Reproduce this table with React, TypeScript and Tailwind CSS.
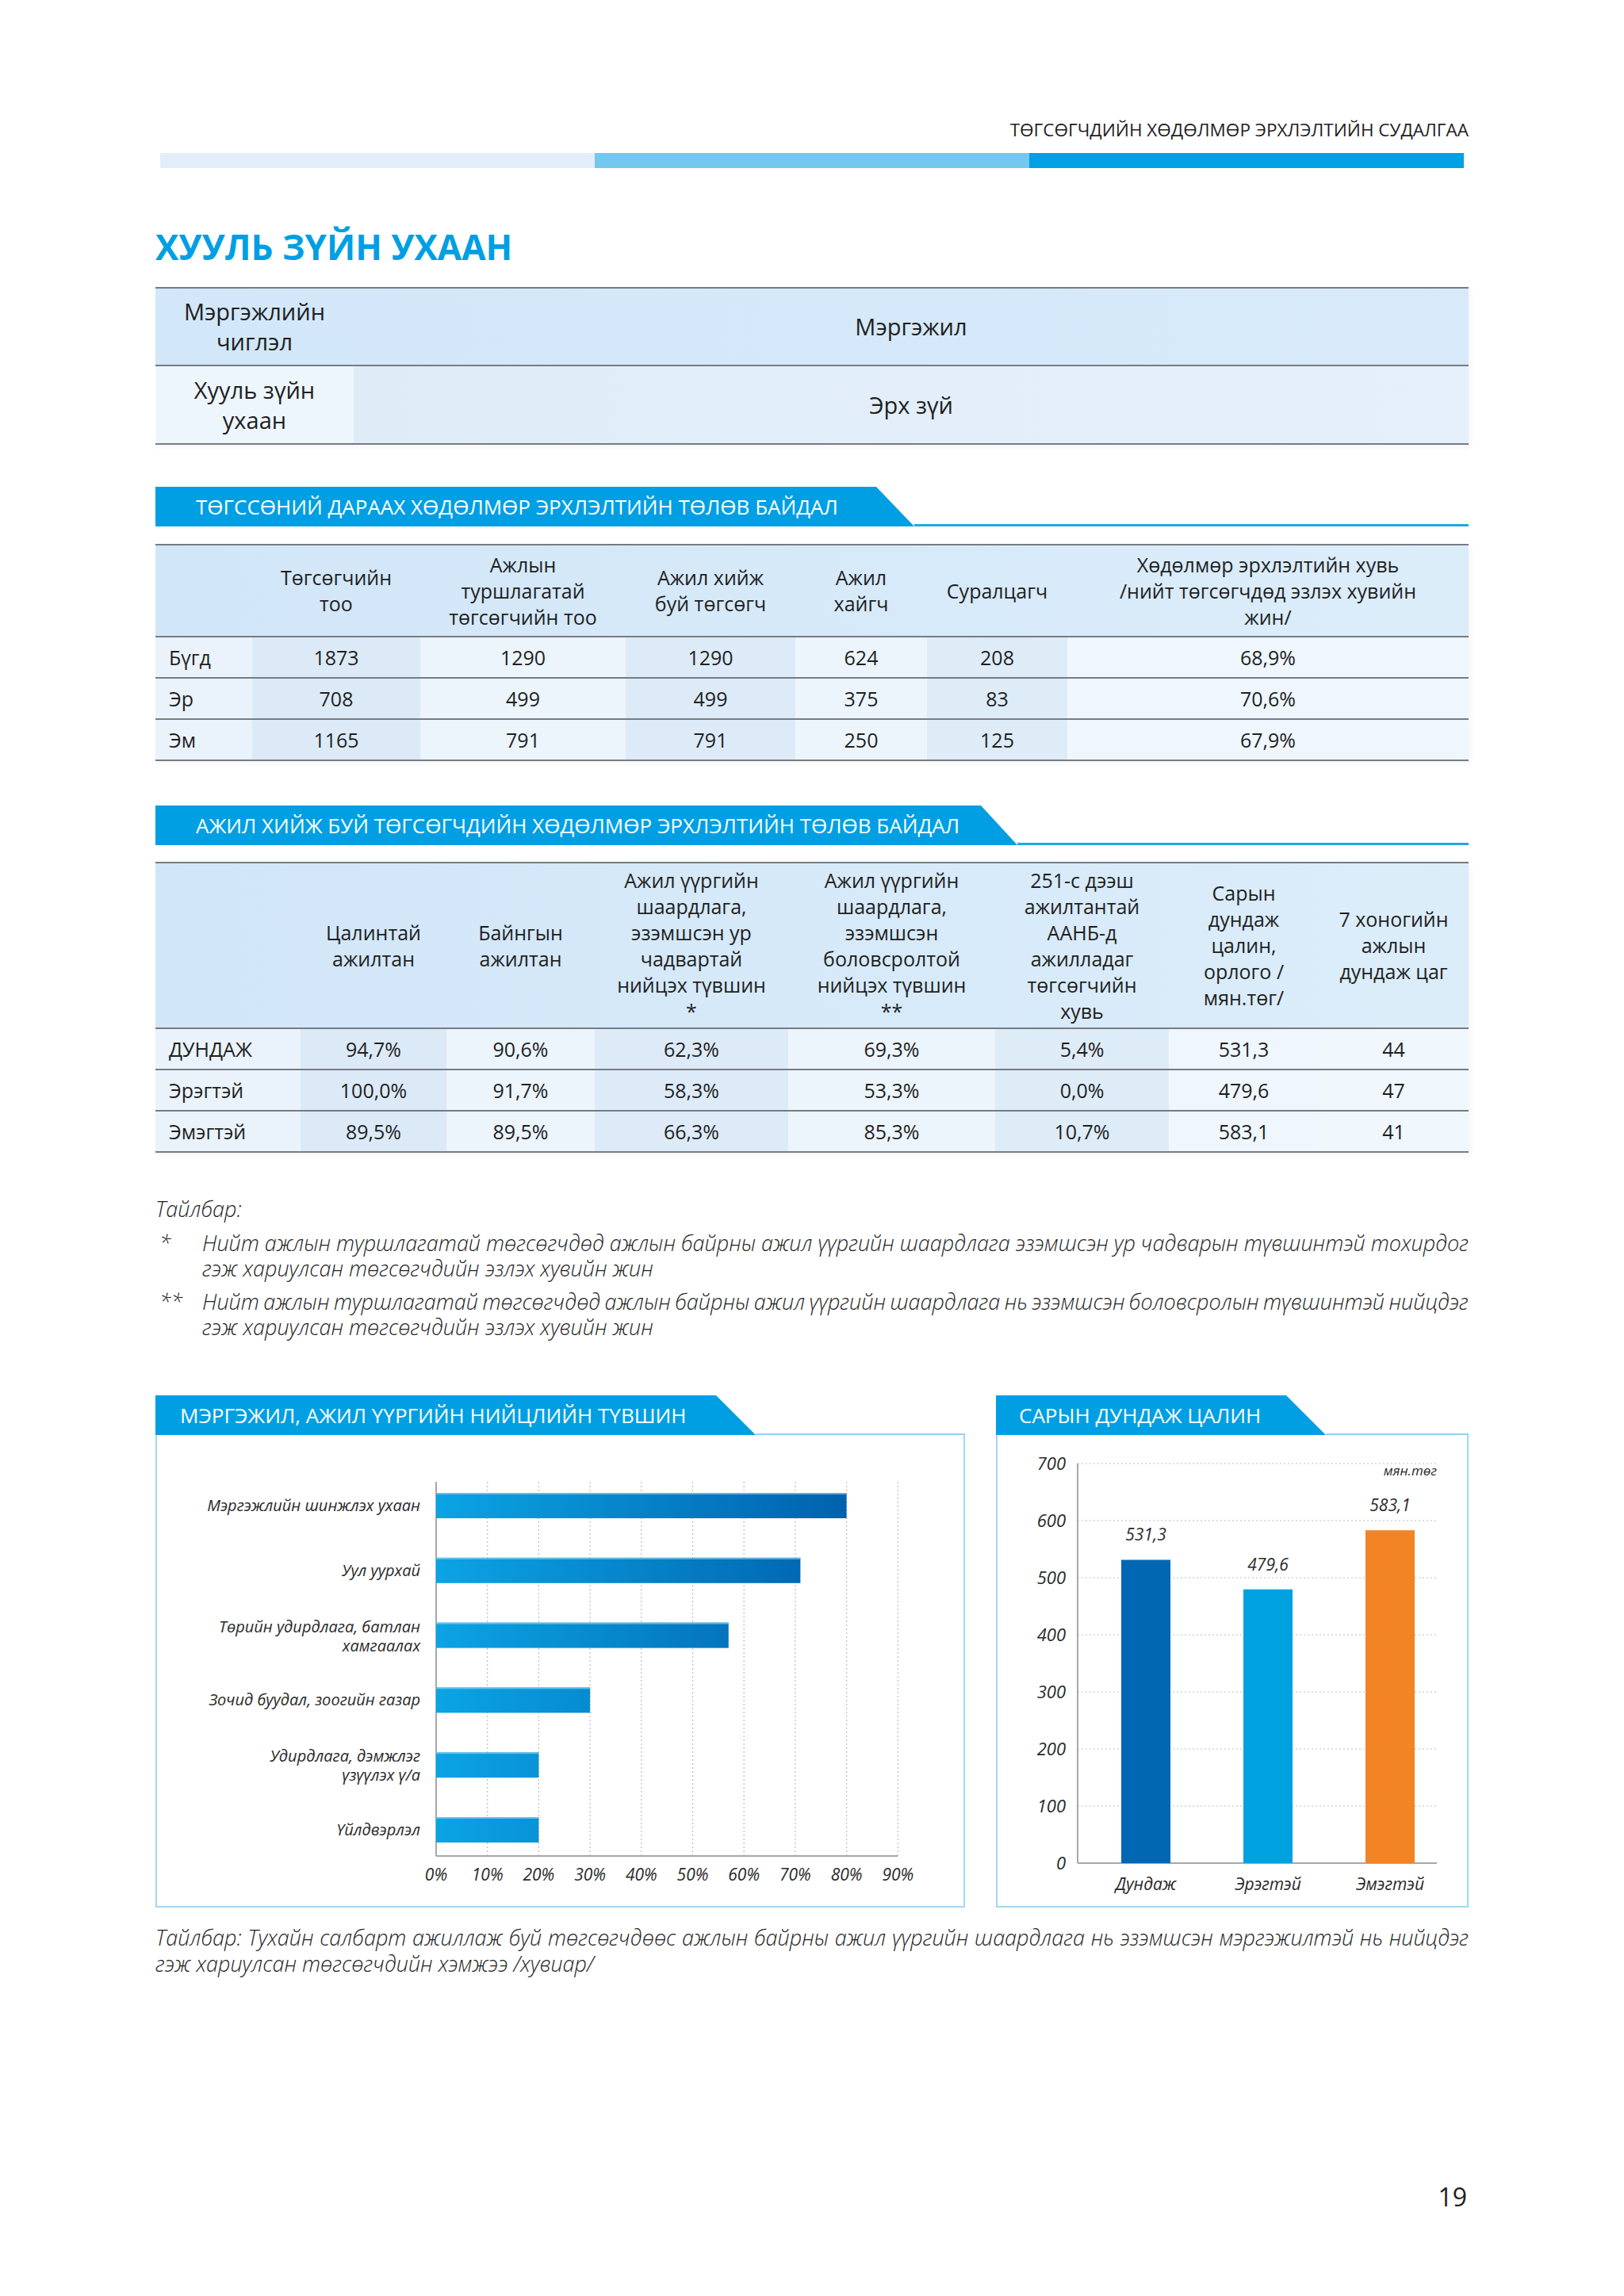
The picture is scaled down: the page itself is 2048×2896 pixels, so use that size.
import React from "react";

const T2_COLS = "grid grid-cols-[122px_212px_259px_214px_166px_177px_506px]";
const T3_COLS = "grid grid-cols-[183px_184px_187px_244px_261px_219px_189px_189px]";

const T2_BG = [
  "bg-[#eaf3fb]",
  "bg-[#dceaf7]",
  "bg-[#ecf4fc]",
  "bg-[#ddebf8]",
  "bg-[#edf5fc]",
  "bg-[#deecf8]",
  "bg-[#eff6fd]",
];
const T3_BG = [
  "bg-[#eaf3fb]",
  "bg-[#dceaf7]",
  "bg-[#ecf4fc]",
  "bg-[#ddebf8]",
  "bg-[#edf5fc]",
  "bg-[#deecf8]",
  "bg-[#eff6fd]",
  "bg-[#f0f7fd]",
];

const t2Rows = [
  ["Бүгд", "1873", "1290", "1290", "624", "208", "68,9%"],
  ["Эр", "708", "499", "499", "375", "83", "70,6%"],
  ["Эм", "1165", "791", "791", "250", "125", "67,9%"],
];

const t3Rows = [
  ["ДУНДАЖ", "94,7%", "90,6%", "62,3%", "69,3%", "5,4%", "531,3", "44"],
  ["Эрэгтэй", "100,0%", "91,7%", "58,3%", "53,3%", "0,0%", "479,6", "47"],
  ["Эмэгтэй", "89,5%", "89,5%", "66,3%", "85,3%", "10,7%", "583,1", "41"],
];

function Lines({ lines }: { lines: string[] }) {
  return (
    <div className="flex items-center justify-center text-center">
      <div>
        {lines.map((l, i) => (
          <div key={i}>{l}</div>
        ))}
      </div>
    </div>
  );
}

function JLine({ text }: { text: string }) {
  const words = text.split(" ");
  return (
    <div className="flex justify-between whitespace-nowrap">
      {words.map((w, i) => (
        <span key={i}>{w}</span>
      ))}
    </div>
  );
}

function HBarChart() {
  const x0 = 352;
  const step = 64.7;
  const bars = [
    { v: 80, lines: ["Мэргэжлийн шинжлэх ухаан"] },
    { v: 71, lines: ["Уул уурхай"] },
    { v: 57, lines: ["Төрийн удирдлага, батлан", "хамгаалах"] },
    { v: 30, lines: ["Зочид буудал, зоогийн газар"] },
    { v: 20, lines: ["Удирдлага, дэмжлэг", "үзүүлэх ү/а"] },
    { v: 20, lines: ["Үйлдвэрлэл"] },
  ];
  const grid = [1, 2, 3, 4, 5, 6, 7, 8, 9];
  const ticks = [0, 1, 2, 3, 4, 5, 6, 7, 8, 9];
  return (
    <svg width="1017" height="594" viewBox="0 0 1017 594" className="block">
      <defs>
        <linearGradient id="hbar" gradientUnits="userSpaceOnUse" x1="352" y1="0" x2="872" y2="0">
          <stop offset="0" stopColor="#0ba4e4" />
          <stop offset="1" stopColor="#0061ae" />
        </linearGradient>
      </defs>
      {grid.map((i) => (
        <line
          key={i}
          x1={x0 + i * step}
          x2={x0 + i * step}
          y1={59}
          y2={531}
          stroke="#bdbdbd"
          strokeWidth={1.2}
          strokeDasharray="2 3"
        />
      ))}
      <line x1={x0} x2={x0} y1={59} y2={531} stroke="#a8a8a8" strokeWidth={2} />
      <line x1={x0} x2={x0 + 9 * step} y1={531} y2={531} stroke="#a8a8a8" strokeWidth={2} />
      {bars.map((b, i) => {
        const y = 73 + i * 81.8;
        const w = (b.v / 10) * step;
        const cy = y + 16;
        return (
          <g key={i}>
            <rect x={x0} y={y} width={w} height={32} fill="url(#hbar)" />
            <rect x={x0} y={y} width={w} height={2} fill="#7fd0f2" opacity={0.7} />
            {b.lines.length === 1 ? (
              <text
                x={332}
                y={cy + 7}
                textAnchor="end"
                fontFamily="'Open Sans', sans-serif"
                fontStyle="italic"
                fontSize={20}
                fill="#2a2a2a"
              >
                {b.lines[0]}
              </text>
            ) : (
              <text
                x={332}
                y={cy - 11 + 7}
                textAnchor="end"
                fontFamily="'Open Sans', sans-serif"
                fontStyle="italic"
                fontSize={20}
                fill="#2a2a2a"
              >
                <tspan x={332}>{b.lines[0]}</tspan>
                <tspan x={332} dy={24}>
                  {b.lines[1]}
                </tspan>
              </text>
            )}
          </g>
        );
      })}
      {ticks.map((i) => (
        <text
          key={i}
          x={x0 + i * step}
          y={562}
          textAnchor="middle"
          fontFamily="'Open Sans', sans-serif"
          fontStyle="italic"
          fontSize={21}
          fill="#2a2a2a"
        >
          {i * 10}%
        </text>
      ))}
    </svg>
  );
}

function VBarChart() {
  const y0 = 540;
  const k = 0.72;
  const levels = [0, 100, 200, 300, 400, 500, 600, 700];
  const bars = [
    { x: 156, v: 531.3, c: "#0067b3", label: "531,3", name: "Дундаж" },
    { x: 310, v: 479.6, c: "#00a1e1", label: "479,6", name: "Эрэгтэй" },
    { x: 464, v: 583.1, c: "#f28425", label: "583,1", name: "Эмэгтэй" },
  ];
  return (
    <svg width="592" height="594" viewBox="0 0 592 594" className="block">
      {levels.slice(1).map((v) => (
        <line
          key={v}
          x1={101}
          x2={554}
          y1={y0 - v * k}
          y2={y0 - v * k}
          stroke="#bdbdbd"
          strokeWidth={1.2}
          strokeDasharray="2 3"
        />
      ))}
      <line x1={101} x2={101} y1={36} y2={y0} stroke="#a8a8a8" strokeWidth={2} />
      <line x1={101} x2={554} y1={y0} y2={y0} stroke="#a8a8a8" strokeWidth={2} />
      {levels.map((v) => (
        <text
          key={v}
          x={86}
          y={y0 - v * k + 8}
          textAnchor="end"
          fontFamily="'Open Sans', sans-serif"
          fontStyle="italic"
          fontSize={22}
          fill="#2a2a2a"
        >
          {v}
        </text>
      ))}
      <text
        x={554}
        y={51}
        textAnchor="end"
        fontFamily="'Open Sans', sans-serif"
        fontStyle="italic"
        fontSize={17}
        fill="#2a2a2a"
      >
        мян.төг
      </text>
      {bars.map((b) => {
        const top = y0 - b.v * k;
        return (
          <g key={b.name}>
            <rect x={b.x} y={top} width={62} height={y0 - top} fill={b.c} />
            <text
              x={b.x + 31}
              y={top - 24}
              textAnchor="middle"
              fontFamily="'Open Sans', sans-serif"
              fontStyle="italic"
              fontSize={21}
              fill="#2a2a2a"
            >
              {b.label}
            </text>
            <text
              x={b.x + 31}
              y={574}
              textAnchor="middle"
              fontFamily="'Open Sans', sans-serif"
              fontStyle="italic"
              fontSize={21}
              fill="#2a2a2a"
            >
              {b.name}
            </text>
          </g>
        );
      })}
    </svg>
  );
}

export default function App() {
  return (
    <div className="w-[2048px] h-[2896px] bg-white font-['Open_Sans',sans-serif] text-[#1f1f1f] flex flex-col px-[196px]">
      {/* Running header */}
      <div className="pt-[149px] text-right text-[22.5px] leading-[30px] uppercase">
        ТӨГСӨГЧДИЙН ХӨДӨЛМӨР ЭРХЛЭЛТИЙН СУДАЛГАА
      </div>
      <div className="mt-[14px] flex h-[19px] px-[6px]">
        <div className="flex-1 bg-[#e2eef9]" />
        <div className="flex-1 bg-[#74c7ef]" />
        <div className="flex-1 bg-[#00a1e2]" />
      </div>

      {/* Title */}
      <div className="mt-[69px] text-[44px] leading-[60px] font-bold text-[#009fe3]">ХУУЛЬ ЗҮЙН УХААН</div>

      {/* Table 1 */}
      <div className="mt-[21px] border-t-2 border-[#767c83] text-[29px] leading-[38px] shadow-[3px_4px_6px_rgba(0,0,0,0.04)]">
        <div className="grid grid-cols-[250px_1fr] h-[98px] border-b-2 border-[#767c83] bg-linear-to-r from-[#d2e7f9] to-[#d8eafa]">
          <Lines lines={["Мэргэжлийн", "чиглэл"]} />
          <Lines lines={["Мэргэжил"]} />
        </div>
        <div className="grid grid-cols-[250px_1fr] h-[99px] border-b-2 border-[#767c83]">
          <div className="bg-[#eef6fd] flex items-center justify-center">
            <Lines lines={["Хууль зүйн", "ухаан"]} />
          </div>
          <div className="bg-linear-to-r from-[#dfecf8] to-[#e6f0fa] flex items-center justify-center">Эрх зүй</div>
        </div>
      </div>

      {/* Banner 1 */}
      <div className="mt-[53px] flex items-end h-[50px]">
        <div className="w-[957px] h-[50px] bg-[#009fe3] text-white text-[26px] font-medium flex items-center pl-[51px] [clip-path:polygon(0_0,calc(100%_-_48px)_0,100%_100%,0_100%)]">
          ТӨГССӨНИЙ ДАРААХ ХӨДӨЛМӨР ЭРХЛЭЛТИЙН ТӨЛӨВ БАЙДАЛ
        </div>
        <div className="flex-1 h-[3px] bg-[#1fa8e2]" />
      </div>

      {/* Table 2 */}
      <div className="mt-[22px] border-t-2 border-[#767c83] text-[25px] leading-[33px] shadow-[3px_4px_6px_rgba(0,0,0,0.04)]">
        <div className={`${T2_COLS} h-[116px] border-b-2 border-[#767c83] bg-linear-to-r from-[#d1e6f8] to-[#dcedfa]`}>
          <div />
          <Lines lines={["Төгсөгчийн", "тоо"]} />
          <Lines lines={["Ажлын", "туршлагатай", "төгсөгчийн тоо"]} />
          <Lines lines={["Ажил хийж", "буй төгсөгч"]} />
          <Lines lines={["Ажил", "хайгч"]} />
          <Lines lines={["Суралцагч"]} />
          <Lines lines={["Хөдөлмөр эрхлэлтийн хувь", "/нийт төгсөгчдөд эзлэх хувийн", "жин/"]} />
        </div>
        {t2Rows.map((row, r) => (
          <div key={r} className={`${T2_COLS} h-[52px] border-b-2 border-[#767c83]`}>
            {row.map((c, i) => (
              <div
                key={i}
                className={`${T2_BG[i]} flex items-center ${i === 0 ? "justify-start pl-[17px]" : "justify-center"}`}
              >
                {c}
              </div>
            ))}
          </div>
        ))}
      </div>

      {/* Banner 2 */}
      <div className="mt-[56px] flex items-end h-[50px]">
        <div className="w-[1087px] h-[50px] bg-[#009fe3] text-white text-[26px] font-medium flex items-center pl-[51px] [clip-path:polygon(0_0,calc(100%_-_46px)_0,100%_100%,0_100%)]">
          АЖИЛ ХИЙЖ БУЙ ТӨГСӨГЧДИЙН ХӨДӨЛМӨР ЭРХЛЭЛТИЙН ТӨЛӨВ БАЙДАЛ
        </div>
        <div className="flex-1 h-[3px] bg-[#1fa8e2]" />
      </div>

      {/* Table 3 */}
      <div className="mt-[21px] border-t-2 border-[#767c83] text-[25px] leading-[33px] shadow-[3px_4px_6px_rgba(0,0,0,0.04)]">
        <div className={`${T3_COLS} h-[209px] border-b-2 border-[#767c83] bg-linear-to-r from-[#d1e6f8] to-[#dcedfa]`}>
          <div />
          <Lines lines={["Цалинтай", "ажилтан"]} />
          <Lines lines={["Байнгын", "ажилтан"]} />
          <Lines lines={["Ажил үүргийн", "шаардлага,", "эзэмшсэн ур", "чадвартай", "нийцэх түвшин", "*"]} />
          <Lines lines={["Ажил үүргийн", "шаардлага,", "эзэмшсэн", "боловсролтой", "нийцэх түвшин", "**"]} />
          <Lines lines={["251-с дээш", "ажилтантай", "ААНБ-д", "ажилладаг", "төгсөгчийн", "хувь"]} />
          <Lines lines={["Сарын", "дундаж", "цалин,", "орлого /", "мян.төг/"]} />
          <Lines lines={["7 хоногийн", "ажлын", "дундаж цаг"]} />
        </div>
        {t3Rows.map((row, r) => (
          <div key={r} className={`${T3_COLS} h-[52px] border-b-2 border-[#767c83]`}>
            {row.map((c, i) => (
              <div
                key={i}
                className={`${T3_BG[i]} flex items-center ${i === 0 ? "justify-start pl-[17px]" : "justify-center"}`}
              >
                {c}
              </div>
            ))}
          </div>
        ))}
      </div>

      {/* Notes */}
      <div className="mt-[55px] text-[27px] leading-[32px] italic font-light text-[#1f1f1f]">
        <div>Тайлбар:</div>
        <div className="mt-[11px] grid grid-cols-[59px_1fr]">
          <div className="pl-[5px]">*</div>
          <div className="min-w-0">
            <JLine text="Нийт ажлын туршлагатай төгсөгчдөд ажлын байрны ажил үүргийн шаардлага эзэмшсэн ур чадварын түвшинтэй тохирдог" />
            <div>гэж хариулсан төгсөгчдийн эзлэх хувийн жин</div>
          </div>
        </div>
        <div className="mt-[10px] grid grid-cols-[59px_1fr]">
          <div className="pl-[5px]">**</div>
          <div className="min-w-0">
            <JLine text="Нийт ажлын туршлагатай төгсөгчдөд ажлын байрны ажил үүргийн шаардлага нь эзэмшсэн боловсролын түвшинтэй нийцдэг" />
            <div>гэж хариулсан төгсөгчдийн эзлэх хувийн жин</div>
          </div>
        </div>
      </div>

      {/* Charts */}
      <div className="mt-[70px] flex gap-[39px]">
        <div className="w-[1021px] flex flex-col">
          <div className="flex items-end h-[50px]">
            <div className="w-[757px] h-[50px] bg-[#009fe3] text-white text-[26px] font-medium flex items-center pl-[31px] [clip-path:polygon(0_0,calc(100%_-_50px)_0,100%_100%,0_100%)]">
              МЭРГЭЖИЛ, АЖИЛ ҮҮРГИЙН НИЙЦЛИЙН ТҮВШИН
            </div>
            <div className="flex-1 h-[2px] bg-[#93d2ef]" />
          </div>
          <div className="h-[596px] border-x-2 border-b-2 border-[#a3d8f0]">
            <HBarChart />
          </div>
        </div>
        <div className="w-[596px] flex flex-col">
          <div className="flex items-end h-[50px]">
            <div className="w-[416px] h-[50px] bg-[#009fe3] text-white text-[26px] font-medium flex items-center pl-[29px] [clip-path:polygon(0_0,calc(100%_-_50px)_0,100%_100%,0_100%)]">
              САРЫН ДУНДАЖ ЦАЛИН
            </div>
            <div className="flex-1 h-[2px] bg-[#93d2ef]" />
          </div>
          <div className="h-[596px] border-x-2 border-b-2 border-[#a3d8f0]">
            <VBarChart />
          </div>
        </div>
      </div>

      {/* Footnote */}
      <div className="mt-[21px] text-[27px] leading-[33px] italic font-light text-[#1f1f1f]">
        <JLine text="Тайлбар: Тухайн салбарт ажиллаж буй төгсөгчдөөс ажлын байрны ажил үүргийн шаардлага нь эзэмшсэн мэргэжилтэй нь нийцдэг" />
        <div>гэж хариулсан төгсөгчдийн хэмжээ /хувиар/</div>
      </div>

      {/* Page number */}
      <div className="mt-[258px] text-right text-[32px] leading-[40px] pr-[2px]">19</div>
    </div>
  );
}
